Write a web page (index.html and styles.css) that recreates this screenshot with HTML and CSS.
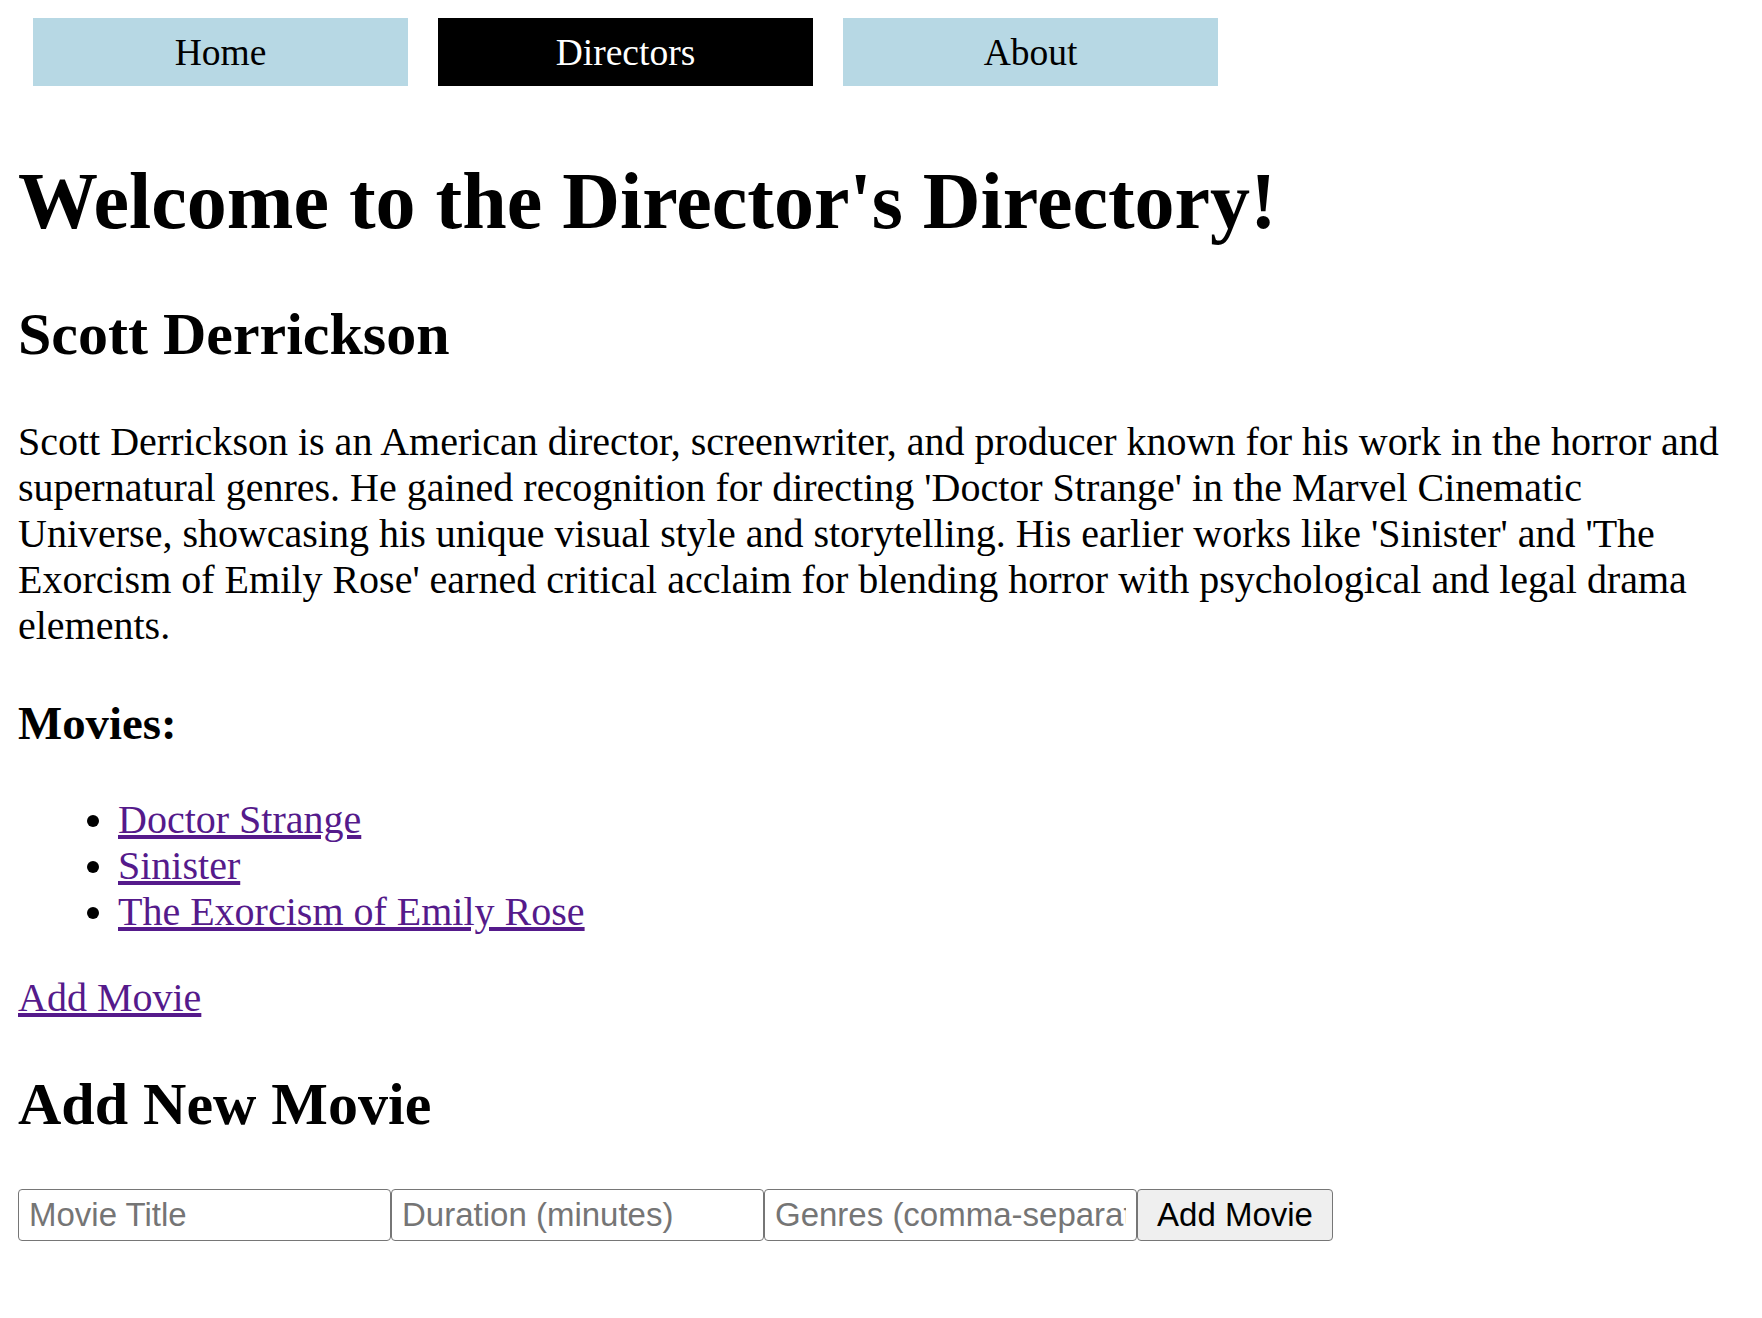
FILE: index.html
```html
<!DOCTYPE html>
<html lang="en">
<head>
<meta charset="utf-8">
<title>Director's Directory</title>
<link rel="stylesheet" href="styles.css">
</head>
<body>
<nav class="nav">
  <a class="nav-item" href="#">Home</a>
  <a class="nav-item nav-item-active" href="#">Directors</a>
  <a class="nav-item" href="#">About</a>
</nav>
<h1 class="title">Welcome to the Director's Directory!</h1>
<h2 class="subtitle">Scott Derrickson</h2>
<p class="bio">Scott Derrickson is an American director, screenwriter, and producer known for his work in the horror and supernatural genres. He gained recognition for directing 'Doctor Strange' in the Marvel Cinematic Universe, showcasing his unique visual style and storytelling. His earlier works like 'Sinister' and 'The Exorcism of Emily Rose' earned critical acclaim for blending horror with psychological and legal drama elements.</p>
<h3 class="section">Movies:</h3>
<ul class="movies">
  <li><a class="link" href="#">Doctor Strange</a></li>
  <li><a class="link" href="#">Sinister</a></li>
  <li><a class="link" href="#">The Exorcism of Emily Rose</a></li>
</ul>
<p class="add-link"><a class="link" href="#">Add Movie</a></p>
<h2 class="subtitle">Add New Movie</h2>
<form class="movie-form">
  <input class="field" type="text" placeholder="Movie Title"><input class="field" type="text" placeholder="Duration (minutes)"><input class="field" type="text" placeholder="Genres (comma-separated)"><button class="btn" type="button">Add Movie</button>
</form>
</body>
</html>
```

FILE: styles.css
```css
html, body {
  background: #ffffff;
}

body {
  margin: 18px;
  font-family: "Liberation Serif", "Times New Roman", serif;
  font-size: 40px;
  line-height: 46px;
  color: #000000;
}

.nav {
  display: flex;
  padding-bottom: 15px;
}

.nav-item {
  display: block;
  width: 375px;
  margin: 0 15px;
  padding: 12px 0 10px;
  font-size: 37.5px;
  line-height: 46px;
  text-align: center;
  background: #b7d8e4;
  color: #000000;
  text-decoration: none;
}

.nav-item-active {
  background: #000000;
  color: #ffffff;
}

.title {
  font-size: 80px;
  line-height: 92px;
  font-weight: bold;
  margin: 53.6px 0;
}

.subtitle {
  font-size: 60px;
  line-height: 69px;
  font-weight: bold;
  margin: 49.8px 0;
}

.bio {
  margin: 40px 0;
}

.section {
  font-size: 46.8px;
  line-height: 54px;
  font-weight: bold;
  margin: 46.8px 0;
}

.movies {
  margin: 40px 0;
  padding-left: 100px;
}

.link {
  color: #551a8b;
  text-decoration: underline;
}

.add-link {
  margin: 40px 0;
}

.movie-form {
  display: flex;
  margin: 0;
}

.field {
  box-sizing: border-box;
  width: 373px;
  height: 52px;
  margin: 0;
  padding: 0 10px;
  border: 1.5px solid #767676;
  border-radius: 4px;
  font-family: "Liberation Sans", Arial, sans-serif;
  font-size: 33px;
  color: #000000;
  background: #ffffff;
}

.field::placeholder {
  color: #757575;
}

.btn {
  box-sizing: border-box;
  width: 196px;
  height: 52px;
  margin: 0;
  padding: 0 16px;
  border: 1.5px solid #767676;
  border-radius: 4px;
  background: #efefef;
  font-family: "Liberation Sans", Arial, sans-serif;
  font-size: 33px;
  color: #000000;
}
```
